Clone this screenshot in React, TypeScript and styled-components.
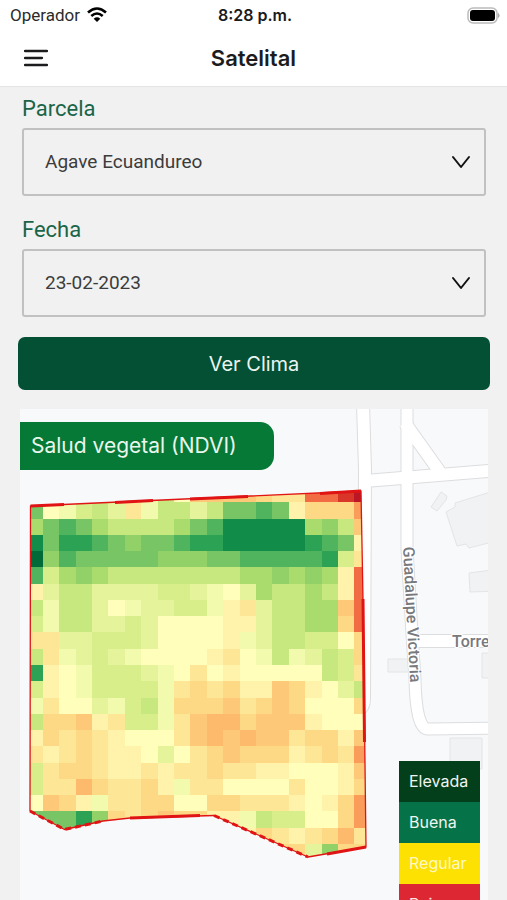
import React from "react";
import styled, { createGlobalStyle, css } from "styled-components";

const Global = createGlobalStyle`
  *, *::before, *::after { box-sizing: border-box; }
  body { margin: 0; background: #f1f1f1; font-family: Inter, sans-serif; color: #1c1c1e; }
`;

const Page = styled.div`
  height: 100vh;
  display: flex;
  flex-direction: column;
  overflow: hidden;
`;

const StatusBar = styled.div`
  flex: none;
  display: grid;
  grid-template-columns: 1fr auto 1fr;
  align-items: center;
  height: 30px;
  padding: 0 7px 0 10px;
  background: #fff;
`;

const Carrier = styled.span`
  display: flex;
  align-items: center;
  gap: 7px;
  font: 400 17px/20px Roboto, sans-serif;
  color: #2b2b2b;
`;

const Clock = styled.time`
  font-size: 16px;
  font-weight: 600;
  line-height: 20px;
  color: #1a1a1a;
`;

const Battery = styled.svg`
  justify-self: end;
`;

const Header = styled.header`
  flex: none;
  display: grid;
  grid-template-columns: 1fr auto 1fr;
  align-items: center;
  height: 57px;
  padding: 0 20px;
  background: #fff;
  border-bottom: 1px solid #e4e4e4;
`;

const MenuButton = styled.button`
  display: flex;
  width: 32px;
  height: 32px;
  padding: 4px;
  border: 0;
  background: none;
  color: #1c1c1e;
`;

const Title = styled.h1`
  margin: 0;
  font-size: 22px;
  font-weight: 600;
  line-height: 28px;
`;

const Form = styled.form`
  flex: none;
  display: flex;
  flex-direction: column;
  padding: 8px 17px 19px 18px;
`;

const Field = styled.div`
  display: flex;
  flex-direction: column;
  gap: 5px;
  margin: 0 4px 20px 4px;
`;

const FieldLabel = styled.label`
  font: 400 22px/28px Roboto, sans-serif;
  color: #1a6547;
`;

const SelectWrap = styled.div`
  position: relative;
  display: flex;
`;

const Select = styled.select`
  flex: 1;
  appearance: none;
  height: 68px;
  padding: 0 60px 0 21px;
  border: 2px solid #c1c1c1;
  border-radius: 3px;
  background: transparent;
  font: 400 19px/24px Roboto, sans-serif;
  color: #3c3c3c;
`;

const Chevron = styled.svg`
  position: absolute;
  top: 50%;
  right: 15px;
  transform: translateY(-50%);
  pointer-events: none;
`;

const PrimaryButton = styled.button`
  height: 53px;
  border: 0;
  border-radius: 7px;
  background: #035035;
  color: #edf5f1;
  font: 400 20px/28px Inter, sans-serif;
`;

const MapCard = styled.section`
  position: relative;
  flex: 1;
  min-height: 0;
  margin: 0 19px 0 20px;
  overflow: hidden;
  background: #f8f9fb;
`;

const MapDrawing = styled.svg`
  display: block;
  width: 100%;
  height: auto;
`;

const MapTitle = styled.h2`
  position: absolute;
  top: 13px;
  left: 0;
  margin: 0;
  padding: 10px 37px 10px 11px;
  border-radius: 0 14px 14px 0;
  background: #067936;
  color: #eaf6ec;
  font: 400 21px/28px Inter, sans-serif;
`;

const Legend = styled.ul`
  position: absolute;
  top: 352px;
  right: 8px;
  width: 81px;
  margin: 0;
  padding: 0;
  list-style: none;
`;

const LegendItem = styled.li<{ $color: string; $text?: string }>`
  height: 41px;
  padding: 0 10px;
  font-size: 16px;
  line-height: 41px;
  ${({ $color, $text }) => css`
    background: ${$color};
    color: ${$text ?? "#f0f5f2"};
  `}
`;

const legend = [
  { name: "Elevada", color: "#043f1b" },
  { name: "Buena", color: "#057347" },
  { name: "Regular", color: "#fde102", text: "#fff8c4" },
  { name: "Baja", color: "#dd2834", text: "#fbe4e4" },
];

const palette: Record<string, string> = {
  a: "#006a38", b: "#128d49", c: "#2ca255", d: "#50b35e", e: "#78c565", f: "#92d168",
  g: "#aadc6d", h: "#c6e87e", i: "#d7ee8b", j: "#e5f49b", k: "#f2fbad", l: "#fffebb",
  m: "#fff2aa", n: "#fee697", o: "#fed985", p: "#fdc978", q: "#fdba6c", r: "#fa9c5a",
  s: "#f16c43", t: "#d93529", u: "#ba1626",
};

const cells = [
  "elkihjnkhlpppponnsstu",
  "elkihjnkhhjheedemooor",
  "gedeghhhhgedbbbbbgfhp",
  "beccdefeedccbbbbbcdem",
  "afdeeeeefffeedddddcin",
  "digfghhhhhhhhggfgfgms",
  "mjhhjjjjiijkljghhghms",
  "hkhhjlkjjiikmnjhhggps",
  "ikhhjjijllllmmjhhggos",
  "nnjjiiijllllmkjhhiilo",
  "hnkjijkllllmnlkhkjhio",
  "cmlkiiijklnlmlllllhin",
  "imlkiiiiknonommpomljh",
  "knlljkihkooopnopolllo",
  "hoopmniiknpqqopppmlll",
  "mononmlllnpqpqppnoomp",
  "nmnonmmljlnopooomnonr",
  "inoonmmnmnnonnmmlllmp",
  "innqonnomknnllllnllmo",
  "lpomknnoolloonnnmlmor",
  "eeecfonopoommkhiillor",
  "eeecfooooonnmmonmnoqn",
  "ooooooooooooooooojfoo",
];

const columnX = (i: number) => (i === 0 ? 8 : 22.7 + (i - 1) * 16.4);
const rowY = (i: number) => 77 + i * 16.27;
const outline = "10.5,97 341,82 343,190 346,438 288,448 194,406.500 110,409 83,412 44.500,420.500 10,402";

function ParcelMap() {
  return (
    <MapDrawing viewBox="0 0 468 640" role="img" aria-label="Mapa NDVI de la parcela">
      <defs>
        <clipPath id="parcel">
          <polygon points={outline} />
        </clipPath>
      </defs>
      <g fill="#f1f2f4" stroke="#e3e4e6" strokeWidth="1">
        <path d="M411 98 L421 83 L427 87 L426 91 L417 102Z" />
        <path d="M426 103 L435 98 L435 94 L480 80 L480 131 L449 139 L446 135 L437 137Z" />
        <path d="M449 164 L480 160 L480 182 L450 183Z" />
        <path d="M368 250 H394 V263 H368Z" />
        <path d="M462 244 H480 V269 H462Z" />
        <path d="M430 329 H462 V360 H430Z" />
      </g>
      <g fill="none" strokeLinecap="butt" strokeLinejoin="round">
        <g stroke="#dcdddf">
          <path strokeWidth="14" d="M343 -5 L345 60 L344 290 Q344 298 338 302" />
          <path strokeWidth="13" d="M387 -5 L387 140 L392 225 L395 270 Q396 320 408 320 L480 319" />
          <path strokeWidth="14" d="M345 72 L480 61" />
          <path strokeWidth="14" d="M385 14 L422 66" />
          <path strokeWidth="14" d="M393 232 L480 232" />
        </g>
        <g stroke="#fff">
          <path strokeWidth="12" d="M343 -5 L345 60 L344 290 Q344 298 338 302" />
          <path strokeWidth="11" d="M387 -5 L387 140 L392 225 L395 270 Q396 320 408 320 L480 319" />
          <path strokeWidth="12" d="M345 72 L480 61" />
          <path strokeWidth="12" d="M385 14 L422 66" />
          <path strokeWidth="12" d="M393 232 L480 232" />
        </g>
      </g>
      <g fill="#77797c" stroke="#fff" strokeWidth="2" paintOrder="stroke" fontFamily="Roboto, sans-serif" fontSize="16" fontWeight="500">
        <text x="432" y="238">Torre</text>
        <text transform="translate(383 138) rotate(87)">Guadalupe Victoria</text>
      </g>
      <g clipPath="url(#parcel)" shapeRendering="crispEdges">
        {cells.flatMap((row, y) =>
          [...row].map((tone, x) => (
            <rect key={`${x}-${y}`} x={columnX(x)} y={rowY(y)} width="17" height="17" fill={palette[tone]} />
          )),
        )}
      </g>
      <g fill="none" stroke="#e01414" strokeLinejoin="round">
        <polygon points={outline} strokeWidth="1.300" />
        <path strokeWidth="3" d="M10.500 97 L44 95.500 M95 93.500 L133 91.500 M170 90 L228 87.500 M300 84.500 L341 82 M343 190 L344.500 333 M110 409 L180 406.500 M346 438 L307 445" />
        <path strokeWidth="3" strokeDasharray="6 4" d="M10 402 L44.500 420.500 L83 412 M194 406.500 L288 448" />
      </g>
    </MapDrawing>
  );
}

function Dropdown({ id, label, value }: { id: string; label: string; value: string }) {
  return (
    <Field>
      <FieldLabel htmlFor={id}>{label}</FieldLabel>
      <SelectWrap>
        <Select id={id} defaultValue={value}>
          <option>{value}</option>
        </Select>
        <Chevron width="20" height="14" viewBox="0 0 20 14" fill="none" stroke="#111" strokeWidth="2" strokeLinecap="round" strokeLinejoin="round">
          <path d="M2 2 L10 12 L18 2" />
        </Chevron>
      </SelectWrap>
    </Field>
  );
}

export default function App() {
  return (
    <Page>
      <Global />
      <StatusBar>
        <Carrier>
          Operador
          <svg width="20" height="16" viewBox="0 0 20 16" fill="none" stroke="#000" strokeWidth="2.600">
            <path d="M1 5.500 Q10 -2.500 19 5.500" />
            <path d="M4.300 9 Q10 4 15.700 9" />
            <path d="M10 15 L6.700 11.700 Q10 9 13.300 11.700Z" fill="#000" stroke="none" />
          </svg>
        </Carrier>
        <Clock>8:28 p.m.</Clock>
        <Battery width="33" height="17" viewBox="0 0 33 17">
          <rect x="1" y="1" width="29" height="15" rx="5" fill="#fff" stroke="#bbb" strokeWidth="1.500" />
          <rect x="3" y="3" width="25" height="11" rx="3" fill="#000" />
          <path d="M31.300 6.500 Q33 8.500 31.300 10.500Z" fill="#aaa" stroke="#aaa" />
        </Battery>
      </StatusBar>
      <Header>
        <MenuButton aria-label="Abrir menú">
          <svg width="24" height="24" viewBox="0 0 24 24" stroke="currentColor" strokeWidth="2.300" strokeLinecap="round">
            <path d="M1 5 H23 M1 12 H18 M1 19 H23" />
          </svg>
        </MenuButton>
        <Title>Satelital</Title>
      </Header>
      <Form>
        <Dropdown id="parcela" label="Parcela" value="Agave Ecuandureo" />
        <Dropdown id="fecha" label="Fecha" value="23-02-2023" />
        <PrimaryButton type="button">Ver Clima</PrimaryButton>
      </Form>
      <MapCard>
        <ParcelMap />
        <MapTitle>Salud vegetal (NDVI)</MapTitle>
        <Legend>
          {legend.map((item) => (
            <LegendItem key={item.name} $color={item.color} $text={item.text}>
              {item.name}
            </LegendItem>
          ))}
        </Legend>
      </MapCard>
    </Page>
  );
}
